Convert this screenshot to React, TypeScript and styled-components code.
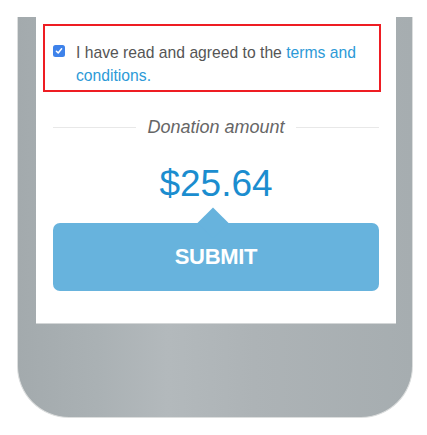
import React from "react";
import styled, { createGlobalStyle } from "styled-components";

const GlobalStyle = createGlobalStyle`
  html, body {
    margin: 0;
    padding: 0;
    background: #ffffff;
  }
  body {
    font-family: "Liberation Sans", Arial, sans-serif;
  }
`;

const Page = styled.div`
  width: 427px;
  height: 435px;
  padding: 17px 0 0 17px;
  box-sizing: border-box;
`;

const PhoneBody = styled.div`
  width: 396px;
  height: 401px;
  box-sizing: border-box;
  padding: 0 16px 0 18px;
  border: 1.5px solid #dcdede;
  border-top: none;
  border-radius: 0 0 52px 52px;
  background: linear-gradient(
    90deg,
    #a3aaad 0%,
    #aab1b4 20%,
    #b3b9bc 38%,
    #adb3b6 60%,
    #a6adb0 100%
  );
`;

const Screen = styled.div`
  height: 306px;
  background: #ffffff;
  display: flex;
  flex-direction: column;
  box-shadow: 0 1px 0 #d3d6d7;
`;

const AgreeBox = styled.label`
  display: flex;
  align-items: flex-start;
  margin: 7px 15px 0 7px;
  padding: 15px 8px 3px 8px;
  border: 2px solid #ee1d23;
  font-size: 15.7px;
  line-height: 23px;
  color: #555555;
`;

const CheckMark = styled.span`
  flex: none;
  width: 12px;
  height: 12px;
  margin: 4px 11px 0 0;
  border-radius: 2.5px;
  background: #3e82ea;
  display: flex;
  align-items: center;
  justify-content: center;
`;

const Terms = styled.a`
  color: #2d9ad7;
  text-decoration: none;
`;

const AmountLabel = styled.div`
  display: flex;
  align-items: center;
  gap: 11px;
  margin: 23px 17px 0;
  height: 24px;
  font-size: 18px;
  font-style: italic;
  color: #666666;
  white-space: nowrap;

  &::before,
  &::after {
    content: "";
    flex: 1;
    height: 1px;
    background: #e8e8e8;
  }
`;

const Amount = styled.div`
  margin-top: 27px;
  text-align: center;
  font-size: 37px;
  line-height: 36px;
  color: #1b8dcf;
`;

const SubmitButton = styled.button`
  position: relative;
  margin: 21px 17px 0;
  height: 68px;
  border: none;
  border-radius: 7px;
  background: #67b3dd;
  color: #ffffff;
  font-family: "Liberation Sans", Arial, sans-serif;
  font-weight: bold;
  font-size: 22px;
  letter-spacing: -0.3px;
  cursor: pointer;

  &::before {
    content: "";
    position: absolute;
    left: 50%;
    top: -11px;
    width: 22px;
    height: 22px;
    margin-left: -14px;
    background: #67b3dd;
    transform: rotate(45deg);
  }
`;

const App: React.FC = () => {
  return (
    <>
      <GlobalStyle />
      <Page>
        <PhoneBody>
          <Screen>
            <AgreeBox>
              <CheckMark>
                <svg width="8" height="8" viewBox="0 0 8 8">
                  <path
                    d="M1.4 4.2 L3.2 5.9 L6.6 1.8"
                    fill="none"
                    stroke="#ffffff"
                    strokeWidth="1.5"
                    strokeLinecap="round"
                    strokeLinejoin="round"
                  />
                </svg>
              </CheckMark>
              <span>
                I have read and agreed to the{" "}
                <Terms href="#">terms and conditions.</Terms>
              </span>
            </AgreeBox>
            <AmountLabel>Donation amount</AmountLabel>
            <Amount>$25.64</Amount>
            <SubmitButton>SUBMIT</SubmitButton>
          </Screen>
        </PhoneBody>
      </Page>
    </>
  );
};

export default App;
